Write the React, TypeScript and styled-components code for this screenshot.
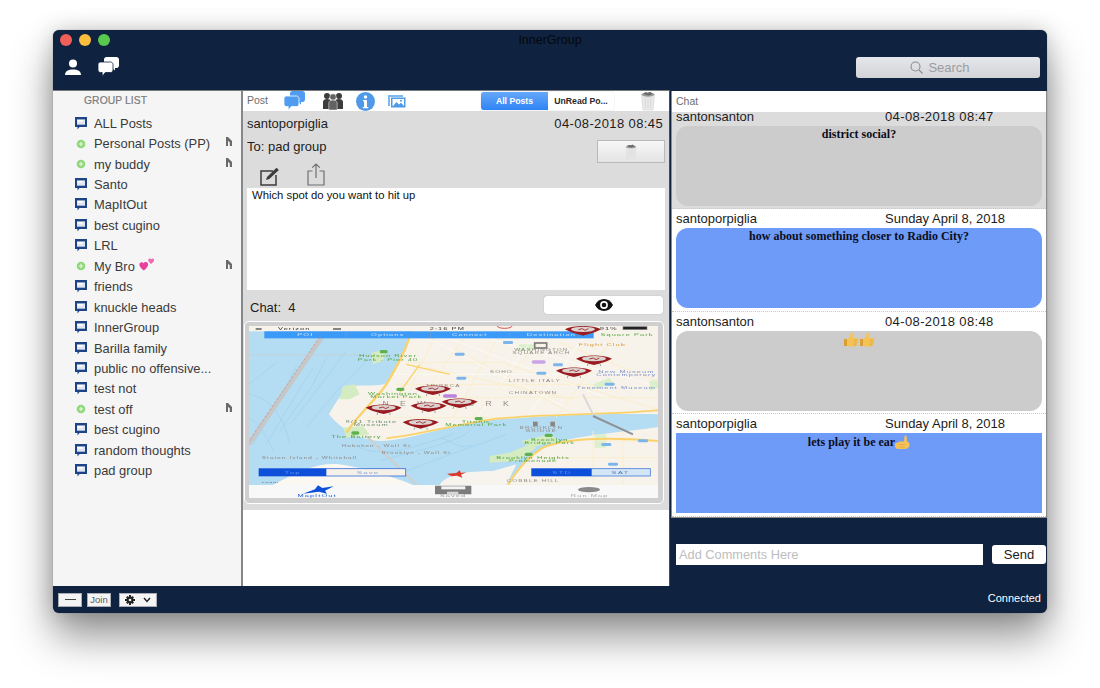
import React from "react";
import styled, { createGlobalStyle } from "styled-components";

const Global = createGlobalStyle`
  html, body { margin: 0; padding: 0; background: #fff; }
  body { font-family: "Liberation Sans", Arial, sans-serif; color: #1c1c1c; }
  * { box-sizing: border-box; }
`;
const NAVY = "#0f2340";

const Page = styled.div`
  width: 1100px; height: 688px; padding: 30px 53px 0; background: #fff; overflow: hidden;
`;
const Win = styled.div`
  width: 994px; height: 583px; border-radius: 6px; background: ${NAVY}; overflow: hidden;
  display: flex; flex-direction: column;
  box-shadow: 0 24px 42px rgba(0,0,0,.42), 0 0 22px rgba(0,0,0,.18), 0 0 1px rgba(0,0,0,.5);
`;
const Header = styled.header`
  height: 60px; flex: none; position: relative; display: flex; flex-direction: column; padding: 4px 7px 0;
`;
const Lights = styled.div`display: flex; gap: 7px;`;
const Light = styled.span<{ $c: string }>`
  width: 12px; height: 12px; border-radius: 50%; background: ${p => p.$c};
`;
const Title = styled.div`
  position: absolute; left: 0; right: 0; top: 3px; text-align: center; font-size: 12.5px; line-height: 15px; color: #04070c;
`;
const HeadRow = styled.div`
  display: flex; align-items: center; height: 26px; margin-top: 8px; padding-left: 5px;
`;
const HeadIcons = styled.div`display: flex; align-items: center; gap: 17px; flex: 1;`;
const SearchBox = styled.div`
  width: 184px; height: 21px; border-radius: 3px;
  background: linear-gradient(#e6e7ea, #d3d4d8);
  display: flex; align-items: center; justify-content: center; gap: 5px; padding-right: 16px;
  color: #9b9da1; font-size: 13px;
`;
const Main = styled.div`flex: 1; display: flex; min-height: 0;`;
const LeftCol = styled.div`width: 617px; flex: none; display: flex; flex-direction: column;`;
const Panels = styled.div`height: 496px; display: flex; background: #fff;`;
const Side = styled.aside`
  width: 190px; flex: none; background: #f5f5f5; border-right: 2px solid #85878a;
  border-top: 1px solid #77797c; padding-top: 3px;
`;
const SideTitle = styled.div`
  font-size: 10.3px; line-height: 14px; color: #7c7c7c; padding-left: 31px; letter-spacing: .1px; margin-bottom: 5px;
  -webkit-text-stroke: .2px #7c7c7c;
`;
const SideRow = styled.div`
  height: 20.45px; display: flex; align-items: center; padding-left: 22px; position: relative;
  font-size: 12.9px; color: #3a3a3a; gap: 7px;
`;
const SideText = styled.span`display: inline-flex; align-items: center; gap: 4px; white-space: nowrap;`;
const HeartWrap = styled.span`display: flex; margin-top: -4px;`;
const Caret = styled.span`
  position: absolute; left: 173px; top: 4px; width: 6px; height: 9px; display: flex;
`;
const Center = styled.section`
  flex: 1; min-width: 0; border-top: 1px solid #77797c; border-right: 1px solid #4c4c4c; display: flex; flex-direction: column; background: #fff;
`;
const PostBar = styled.div`height: 20px; flex: none; display: flex; align-items: center; padding-left: 4px; background: #fff;`;
const PostLabel = styled.span`font-size: 10.5px; color: #6d6d6d; width: 37px; margin-top: -2px;`;
const Slot = styled.span<{ $w: number; $pad?: number }>`
  width: ${p => p.$w}px; padding-left: ${p => p.$pad ?? 0}px; flex: none; display: flex; align-items: center;
`;
const Seg = styled.div`
  width: 133px; height: 18px; border-radius: 3px; display: flex; overflow: hidden; flex: none;
  box-shadow: 0 0 1px rgba(0,0,0,.35); font-size: 8.7px; font-weight: 700;
`;
const SegBtn = styled.span<{ $on?: boolean }>`
  flex: ${p => (p.$on ? "0 0 67px" : "1")}; display: flex; align-items: center; justify-content: center;
  color: ${p => (p.$on ? "#fff" : "#2a2a2a")};
  background: ${p => (p.$on ? "linear-gradient(#66a8f9,#2f83f5)" : "#fff")};
`;
const PostCard = styled.div`height: 399px; flex: none; background: #dcdcdc; display: flex; flex-direction: column; padding: 0 4px;`;
const Meta = styled.div`height: 24px; flex: none; display: flex; align-items: center; justify-content: space-between; font-size: 13px; padding-right: 2px; color: #1c1c1c;`;
const Stamp = styled.span`letter-spacing: .38px;`;
const ToRow = styled.div`height: 28px; flex: none; display: flex; justify-content: space-between; font-size: 13px;`;
const ToText = styled.span`line-height: 15px; margin-top: 4px;`;
const TrashBtn = styled.div`
  width: 68px; height: 23px; margin-top: 5px; border: 1px solid #b9b9b9;
  background: linear-gradient(#f7f7f7,#e4e4e4); display: flex; align-items: center; justify-content: center;
`;
const Tools = styled.div`height: 25px; flex: none; display: flex; align-items: flex-end; padding: 0 0 2px 13px; gap: 27px;`;
const MsgBox = styled.div`
  height: 102px; flex: none; background: #fff; font-size: 11.3px; line-height: 14px; padding: 0 5px; color: #111;
`;
const ChatRow = styled.div`height: 31px; flex: none; display: flex; align-items: center; justify-content: space-between; padding-left: 3px; font-size: 13px;`;
const ChatCount = styled.span`white-space: pre; margin-top: 3px;`;
const EyeBtn = styled.div`
  width: 119px; height: 18px; margin-top: -2px; margin-right: 2px; background: #fff; border-radius: 3px; box-shadow: 0 0 1px rgba(0,0,0,.35);
  display: flex; align-items: center; justify-content: center;
`;
const MapFrame = styled.div`
  width: 420px; height: 183px; margin-left: -3px; border-radius: 5px; border: 1px solid #fff; background: #cfcfcf; padding: 4px 5px 5px 4px; display: flex;
`;
const Foot = styled.footer`height: 27px; flex: none; display: flex; align-items: center; padding: 0 0 0 5px; gap: 5px;`;
const FootBtn = styled.div<{ $w: number; $ml?: number }>`
  width: ${p => p.$w}px; height: 14px; margin-left: ${p => p.$ml ?? 0}px; background: #f4f4f4; border: 1px solid #a9adb3;
  display: flex; align-items: center; justify-content: center; gap: 8px; font-size: 9.5px; color: #5a5a5a;
`;
const Dash = styled.span`width: 11px; height: 1px; background: #444;`;
const RightCol = styled.div`flex: 1; min-width: 0; display: flex; flex-direction: column;`;
const ChatPanel = styled.section`
  height: 427px; flex: none; margin: 1px 0 0 1px; background: #fff; border: 1px solid #8c8c8c; border-width: 0 1px 1px 1px; display: flex; flex-direction: column; overflow: hidden;
`;
const ChatHead = styled.div`height: 21px; flex: none; padding: 4px 4px 0; font-size: 10.5px; line-height: 12px; color: #6d6d6d;`;
const Msg = styled.div<{ $grey?: boolean; $h: number }>`
  height: ${p => p.$h}px; flex: none; background: ${p => (p.$grey ? "#dcdcdc" : "#fff")}; overflow: hidden;
  border-bottom: 1px dotted #c8c8c8; padding: 0 0 0 4px; display: flex; flex-direction: column;
`;
const MsgHead = styled.div<{ $h: number }>`
  height: ${p => p.$h}px; flex: none; display: grid; grid-template-columns: 209px 1fr; font-size: 13px; align-content: end; line-height: 15px; color: #1c1c1c; padding-bottom: 2px;
`;
const Bubble = styled.div<{ $blue?: boolean; $square?: boolean }>`
  width: 366px; height: 80px; flex: none; background: ${p => (p.$blue ? "#6d9bf7" : "#cccccc")};
  border-radius: ${p => (p.$square ? 0 : 12)}px;
  font-family: "Liberation Serif", "Times New Roman", serif; font-weight: 700; font-size: 12px; line-height: 15px; color: #0d0d1c;
  display: flex; justify-content: center; align-items: flex-start; padding-top: ${p => (p.$square ? 2 : 1)}px;
`;
const Composer = styled.div`flex: 1; display: flex; align-items: flex-start; padding: 26px 0 0 6px; position: relative;`;
const Input = styled.div`
  width: 307px; height: 21px; background: #fff; color: #bdbdbd; font-size: 12.8px; line-height: 21px; padding-left: 3px;
`;
const SendBtn = styled.div`
  width: 54px; height: 19px; margin: 1px 0 0 9px; border-radius: 3px; background: #fff; font-size: 13px; line-height: 19px; text-align: center; color: #1c1c1c;
`;
const Status = styled.div`position: absolute; right: 6px; bottom: 8px; color: #fff; font-size: 11px; line-height: 13px;`;

const Person = () => (
  <svg width="16" height="17" viewBox="0 0 16 17"><circle cx="8" cy="4.6" r="4" fill="#fff" /><path d="M0 16c0-4 3.4-5.6 8-5.6S16 12 16 16z" fill="#fff" /></svg>
);
const Chats = ({ c, bg }: { c: string; bg: string }) => (
  <svg width="21" height="20" viewBox="0 0 21 20">
    <path d="M8.500 0H18.400C19.800 0 21 1.100 21 2.500V8.400C21 9.800 19.800 11 18.400 11H17V13.600L13.700 11H8.500C7.100 11 6 9.800 6 8.400V2.500C6 1.100 7.100 0 8.500 0Z" fill={c} />
    <path d="M2.500 5H12.500C13.900 5 15 6.100 15 7.500V13C15 14.400 13.900 15.500 12.500 15.500H7.300L4.200 19.500V15.500H2.500C1.100 15.500 0 14.400 0 13V7.500C0 6.100 1.100 5 2.500 5Z" fill={c} stroke={bg} strokeWidth=".8" />
  </svg>
);
const Group = () => (
  <svg width="20" height="18" viewBox="0 0 20 18">
    <g fill="#3c3c3c"><circle cx="4" cy="4" r="3" /><circle cx="16" cy="4" r="3" /><path d="M0 17V10c0-2 1.600-3 4-3s4 1 4 3v7zM12 17V10c0-2 1.600-3 4-3s4 1 4 3v7z" /></g>
    <g fill="#626262" stroke="#fff" strokeWidth=".5"><circle cx="10" cy="5" r="3.200" /><path d="M5.800 18v-7c0-2 1.800-3 4.200-3s4.200 1 4.200 3v7z" /></g>
  </svg>
);
const Info = () => (
  <svg width="19" height="19" viewBox="0 0 19 19"><circle cx="9.500" cy="9.500" r="9.500" fill="#4f9ae8" /><circle cx="9.500" cy="5" r="1.700" fill="#fff" /><path d="M7 8h4v7h1.300v1.200H6.800V15H8V9.200H7z" fill="#fff" /></svg>
);
const Pic = () => (
  <svg width="18" height="13" viewBox="0 0 18 13"><path d="M0 0h15v2H2v9H0z" fill="#7fb8ee" /><rect x="3" y="2.500" width="14.500" height="10" fill="#4f9ae8" /><rect x="4.500" y="4" width="11.500" height="7" fill="#fff" /><path d="M5 11l3.500-4 2.500 2.500 2-1.800L16 11z" fill="#4f9ae8" /><circle cx="13" cy="5.800" r="1" fill="#4f9ae8" /></svg>
);
const Trash = ({ w, h }: { w: number; h: number }) => (
  <svg width={w} height={h} viewBox="0 0 16 20">
    <path d="M1.500 3.500h13L13 19H3z" fill="#e9e9e9" stroke="#d2d2d2" strokeWidth=".6" />
    <ellipse cx="8" cy="3.500" rx="6.500" ry="2.200" fill="#9a9a9a" />
    <path d="M3.500 3l2-2 2 1.400L10 .8l2.500 2.200-4 1.500z" fill="#666" />
    <path d="M5 6l.6 11M8 6v11M11 6l-.6 11" stroke="#d4d4d4" strokeWidth=".8" />
  </svg>
);
const Compose = () => (
  <svg width="20" height="19" viewBox="0 0 20 19" fill="none">
    <path d="M13 4H1v14h15V8" stroke="#3d3d3d" strokeWidth="1.500" />
    <path d="M6 13l1-3L16.500.8l2.400 2.200L9.300 12z" fill="#3d3d3d" />
  </svg>
);
const Share = () => (
  <svg width="18" height="23" viewBox="0 0 18 23" fill="none" stroke="#6f6f6f" strokeWidth="1.200">
    <path d="M5.500 8H1v14h16V8h-4.500" /><path d="M9 15V1M5.200 4.600L9 1l3.800 3.600" />
  </svg>
);
const Eye = () => (
  <svg width="18" height="12" viewBox="0 0 18 12"><path d="M0 6c2-3.700 5-6 9-6s7 2.300 9 6c-2 3.700-5 6-9 6s-7-2.300-9-6z" fill="#111" /><circle cx="9" cy="6" r="3.900" fill="#fff" /><circle cx="9" cy="6" r="2.300" fill="#111" /></svg>
);
const Gear = () => (
  <svg width="10" height="10" viewBox="0 0 10 10"><g fill="#222"><circle cx="5" cy="5" r="3.400" /><path d="M4 0h2v2H4zM4 8h2v2H4zM0 4h2v2H0zM8 4h2v2H8zM1 2.400L2.400 1l1.300 1.300-1.400 1.400zM6.300 7.700l1.400-1.400L9 7.600 7.600 9zM1 7.600l1.300-1.300 1.400 1.400L2.400 9zM6.300 2.300L7.600 1 9 2.400 7.700 3.700z" /></g><circle cx="5" cy="5" r="1.300" fill="#f4f4f4" /></svg>
);
const Chevron = () => (
  <svg width="8" height="6" viewBox="0 0 8 6" fill="none"><path d="M1 1l3 3.400L7 1" stroke="#222" strokeWidth="1.500" /></svg>
);
const Mag = () => (
  <svg width="13" height="13" viewBox="0 0 13 13" fill="none" stroke="#8a8c90" strokeWidth="1.100"><circle cx="5.500" cy="5.500" r="4.500" /><path d="M9 9l3.500 3.500" /></svg>
);
const Bub = () => (
  <svg width="12" height="13" viewBox="0 0 12 13"><path d="M0 0h12v10H4.500L2.500 12.500V10H0z" fill="#1c4487" /><rect x="2" y="2.400" width="8" height="5.300" fill="#dfe6f1" /><rect x="2.500" y="3" width="5" height="1.700" fill="#fff" /></svg>
);
const Plus = () => (
  <svg width="12" height="12" viewBox="0 0 12 12"><circle cx="6" cy="6" r="4.300" fill="#8fd87a" /><path d="M6 3.800v4.400M3.800 6h4.400" stroke="#e9f8e4" strokeWidth="1.100" /></svg>
);
const CaretIcon = () => (
  <svg width="6" height="9" viewBox="0 0 6 9"><path d="M0 0h2L6 4v5H3.800V5.500L2 3.800V9H0z" fill="#6a6a6a" /></svg>
);
const Hearts = () => (
  <svg width="16" height="14" viewBox="0 0 16 14">
    <path d="M4.800 13.500C1.500 11 0 9 .5 6.800 1 5 3.400 4.600 4.700 6.300 5.600 4.400 8.300 4.600 9 6.500 9.700 8.800 7.500 11.500 4.800 13.500Z" fill="#e83f9c" />
    <path d="M12 7C10 5.500 9 4.200 9.300 2.800 9.700 1.400 11.300 1.200 12.100 2.300 12.800 1 14.600 1.200 15.100 2.500 15.500 4 13.900 5.700 12 7Z" fill="#f06bb4" />
  </svg>
);
const Thumb = () => (
  <svg width="16" height="15" viewBox="0 0 16 15">
    <path d="M1 7h3v7H1z" fill="#d99f33" />
    <path d="M4 7.500C6 6 7.500 4 7.500 1.500 7.500 0 10 0 10 2.200 10 3.600 9.500 5 9.500 5.700H14C15.800 5.700 15.800 8 14.800 8.300 15.800 9 15.400 10.600 14.400 10.800 15 11.600 14.500 12.900 13.500 13 13.800 13.800 13.200 14.600 12.300 14.600H7C5.500 14.600 4.800 14 4 13.800Z" fill="#f4c257" />
    <path d="M10.500 8.300H14.800M10.500 10.800H14.400M10.500 13H13.500" stroke="#d99f33" strokeWidth=".6" />
  </svg>
);
const CallMe = () => (
  <svg width="15" height="15" viewBox="0 0 15 15">
    <path d="M1 8C2.500 8 4 6.500 5 6.500H9L9.500 1.500C9.700 .2 11.500 .2 11.700 1.500L12 6.500C14 7 15 8.500 14.500 10.500 14 13 12 14 9.500 14H3C1 14 0 12.500 0 11 0 9.500 0 8 1 8Z" fill="#f4c257" />
    <path d="M4 9.500H10M4 12H10" stroke="#d99f33" strokeWidth=".6" />
  </svg>
);

const Pin = ({ x, y }: { x: number; y: number }) => (
  <g transform={`translate(${x} ${y})`}>
    <path d="M-54 -3C-30 -16 30 -16 54 -3 40 6 15 12 0 16-15 12-40 6-54 -3Z" fill="#9a1f22" />
    <ellipse cx="0" cy="-3" rx="36" ry="8" fill="#dcd2cf" />
    <path d="M-14 -2l12 -3 8 5 10-5" stroke="#9a1f22" strokeWidth="2.500" fill="none" />
    <path d="M-18 13l-2 6M18 13l2 6" stroke="#777" strokeWidth="2" />
  </g>
);
const greenLabel = { fill: "#52a63c", fontFamily: "Liberation Sans, sans-serif", fontSize: 14, letterSpacing: 2 };
const greyLabel = { fill: "#8f8b85", fontFamily: "Liberation Sans, sans-serif", fontSize: 12, letterSpacing: 2 };
const barLabel = { ...greyLabel, fill: "#cfe6ff", fontSize: 14 };
const T = ({ x, y, s, k = greenLabel, a = "start", sy = .75, sx = 1.6 }: any) => (
  <text transform={`translate(${x} ${y}) scale(${sx} ${sy})`} style={k} textAnchor={a}>{s}</text>
);

const MapArt = () => (
  <svg width="409" height="172" viewBox="28 125 1227 516" style={{ display: "block" }}>
    <defs>
      <filter id="soft" x="0" y="0" width="1" height="1"><feGaussianBlur stdDeviation="1.800" /></filter>
    </defs>
    <g filter="url(#soft)">
      <rect x="28" y="125" width="1227" height="516" fill="#b4dcf2" />
      <g fill="none" stroke="#9fd0ef" strokeWidth="2">
        <path d="M28 300L110 235M40 480L130 330 170 245M80 480L170 330 220 250M120 440L220 300 260 220M160 410L260 280 320 200M200 430L300 310 380 230" />
        <path d="M28 330C90 340 130 390 150 480M28 400C60 420 90 470 100 500M420 530C520 500 640 480 690 440M500 560C600 520 720 480 800 450M360 490C430 520 520 490 640 450M600 460C640 470 660 500 700 480" />
      </g>
      <path d="M270 125L28 480" stroke="#c6c7c9" strokeWidth="13" fill="none" />
      <path d="M262 125L28 470" stroke="#d7876d" strokeWidth="2" strokeDasharray="8 5" fill="none" />
      <path d="M28 212H470" stroke="#c9ced1" strokeWidth="2" />
      <path d="M520 125H1255V390C1100 385 900 395 780 405 620 420 510 470 420 470 350 465 300 430 268 390 290 350 310 320 340 305 390 300 430 310 450 290 480 230 505 175 520 125Z" fill="#f7f3eb" />
      <path d="M1255 428C1150 445 1000 450 910 490 860 520 830 560 800 602H1255Z" fill="#f7f3eb" />
      <path d="M600 602C620 570 680 560 760 560L830 540 800 602Z" fill="#f7f4ee" />
      <path d="M100 602C180 560 230 535 300 540 370 550 440 570 520 602Z" fill="#fbf8f2" />
      <path d="M310 305L345 300 360 330 330 345 300 345Z" fill="#d5ecc2" />
      <path d="M310 430L370 425 390 450 320 460Z" fill="#d5ecc2" />
      <path d="M750 515L810 505 870 480 890 490 830 530 750 535Z" fill="#d5ecc2" />
      <path d="M395 205L440 195 430 230 400 240Z" fill="#d5ecc2" />
      <path d="M845 470L930 450 960 470 870 490Z" fill="#d5ecc2" />
      <path d="M840 180H890L880 200H830ZM1060 300L1110 280 1120 295 1070 315ZM1065 450H1100V490H1065ZM1230 290L1255 285V310L1230 320Z" fill="#dcefcc" />
      <g fill="none" stroke="#fbeecb" strokeWidth="3">
        <path d="M600 125L510 320M680 150L560 320M780 150L640 400M900 170L700 400M1120 160L950 400M500 235H800M470 300H1060M560 250L1000 345M960 175L1255 290M640 190L1000 390M800 240L1255 375M450 340H1255M380 400H780M1060 440V600M1150 440V600M1070 470H1255M900 520H1255" />
      </g>
      <g fill="none" stroke="#fff" strokeWidth="1.500">
        <path d="M560 160L980 370M620 160L1100 340M740 160L1230 300M460 270H1000M880 160L720 390M1030 160L860 400" />
      </g>
      <g fill="none" stroke="#fbd26b" strokeWidth="7">
        <path d="M518 125C505 190 470 250 440 300 410 345 360 385 320 445" />
        <path d="M440 462C550 450 640 420 780 402 930 388 1090 392 1255 378" strokeWidth="5" />
        <path d="M1255 470C1100 458 980 460 910 490 860 520 830 560 805 602" strokeWidth="6" />
        <path d="M500 240L630 270M480 325L540 240" strokeWidth="4" />
      </g>
      <path d="M380 455L532 602" stroke="#cecfd0" strokeWidth="7" />
      <path d="M1060 395L1180 450" stroke="#8e9295" strokeWidth="6" />
      <path d="M1030 330L1060 390" stroke="#d9d9d9" strokeWidth="6" />
      <rect x="28" y="125" width="1227" height="16" fill="#f7f3eb" />
      <T x={115} y={138} s="Verizon" k={{ ...greyLabel, fill: "#333", fontSize: 14 }} />
      <path d="M48 131h18v6H48zM280 131h24v6h-24z" fill="#555" opacity=".7" />
      <T x={570} y={138} s="2:16 PM" k={{ ...greyLabel, fill: "#333", fontSize: 14 }} />
      <rect x="1150" y="127" width="72" height="9" fill="#222" stroke="#888" strokeWidth="2" />
      <T x={1080} y={138} s="91%" k={{ ...greyLabel, fill: "#333", fontSize: 14 }} />
      <rect x="74" y="141" width="988" height="21" fill="#3b99f8" />
      <path d="M319 141v21M572 141v21M809 141v21" stroke="#7aa0c9" strokeWidth="2" />
      <T x={197} y={156} s="POI" k={barLabel} a="middle" />
      <T x={444} y={156} s="Options" k={barLabel} a="middle" />
      <T x={690} y={156} s="Connect" k={barLabel} a="middle" />
      <T x={935} y={156} s="Destination" k={barLabel} a="middle" />
      <T x={445} y={219} s="Hudson River" a="middle" />
      <T x={445} y={230} s="Park - Pier 40" a="middle" />
      <T x={460} y={331} s="Washington" a="middle" />
      <T x={470} y={340} s="Market Park" a="middle" />
      <T x={395} y={417} s="9/11 Tribute" a="middle" k={{ ...greenLabel, fill: "#6c8c6a" }} />
      <T x={395} y={426} s="Museum" a="middle" k={{ ...greenLabel, fill: "#6c8c6a" }} />
      <T x={350} y={461} s="The Battery" a="middle" />
      <T x={710} y={415} s="Titanic" a="middle" />
      <T x={710} y={426} s="Memorial Park" a="middle" />
      <T x={930} y={470} s="Brooklyn" a="middle" />
      <T x={930} y={480} s="Bridge Park" a="middle" />
      <T x={880} y={523} s="Brooklyn Heights" a="middle" />
      <T x={880} y={533} s="Promenade" a="middle" />
      <T x={1162} y={156} s="Square Park" a="middle" />
      <T x={1088} y={186} s="Flight Club" a="middle" k={{ ...greenLabel, fill: "#e29a35" }} />
      <T x={905} y={200} s="WASHINGTON" a="middle" k={greyLabel} />
      <T x={905} y={208} s="SQUARE ARCH" a="middle" k={greyLabel} />
      <T x={785} y={265} s="SOHO" a="middle" k={greyLabel} />
      <T x={885} y={293} s="LITTLE ITALY" a="middle" k={greyLabel} />
      <T x={880} y={329} s="CHINATOWN" a="middle" k={greyLabel} />
      <T x={610} y={308} s="TRIBECA" a="middle" k={greyLabel} />
      <T x={635} y={366} s="NEW YORK" a="middle" sx={1} sy={.9} k={{ ...greyLabel, fontSize: 26, letterSpacing: 34 }} />
      <T x={1160} y={266} s="New Museum" a="middle" k={{ ...greenLabel, fill: "#7b8fd0" }} />
      <T x={1160} y={275} s="Contemporary" a="middle" k={{ ...greenLabel, fill: "#7b8fd0" }} />
      <T x={1130} y={313} s="Tenement Museum" a="middle" k={{ ...greenLabel, fill: "#7b8fd0" }} />
      <T x={905} y={435} s="BROOKLYN" a="middle" k={greyLabel} />
      <T x={905} y={444} s="BRIDGE" a="middle" k={greyLabel} />
      <T x={410} y={487} s="Hoboken - Wall St" k={greyLabel} a="middle" />
      <T x={210} y={525} s="Staten Island - Whitehall" k={greyLabel} a="middle" />
      <T x={530} y={510} s="Brooklyn - Wall St" k={greyLabel} a="middle" />
      <T x={880} y={592} s="COBBLE HILL" a="middle" k={greyLabel} />
      <g fill="#7bb5ec">
        <rect x="645" y="205" width="30" height="9" rx="4" /><rect x="790" y="170" width="30" height="9" rx="4" />
        <rect x="650" y="277" width="30" height="9" rx="4" /><rect x="890" y="262" width="30" height="9" rx="4" />
        <rect x="940" y="237" width="30" height="9" rx="4" /><rect x="1095" y="295" width="30" height="9" rx="4" />
        <rect x="1085" y="476" width="30" height="9" rx="4" /><rect x="1195" y="465" width="30" height="9" rx="4" />
        <rect x="1105" y="535" width="30" height="9" rx="4" />
      </g>
      <g fill="#5fb050">
        <rect x="420" y="197" width="24" height="10" rx="5" /><rect x="470" y="310" width="24" height="10" rx="5" />
        <rect x="335" y="441" width="24" height="10" rx="5" /><rect x="705" y="398" width="24" height="10" rx="5" />
        <rect x="915" y="448" width="24" height="10" rx="5" /><rect x="855" y="505" width="24" height="10" rx="5" />
      </g>
      <rect x="885" y="176" width="36" height="15" fill="none" stroke="#7c7a78" strokeWidth="5" />
      <rect x="610" y="330" width="42" height="10" rx="5" fill="#b982e0" />
      <rect x="876" y="228" width="42" height="10" rx="5" fill="#c9a4e6" />
      <rect x="880" y="412" width="14" height="14" fill="#8a8782" /><rect x="932" y="412" width="14" height="14" fill="#8a8782" />
      <ellipse cx="795" cy="125" rx="22" ry="7" fill="none" stroke="#c55" strokeWidth="3" />
      <Pin x={1030} y={138} /><Pin x={1063} y={226} /><Pin x={1003} y={262} />
      <Pin x={580} y={316} /><Pin x={660} y={355} /><Pin x={567} y={367} />
      <Pin x={432} y={373} /><Pin x={543} y={417} />
      <rect x="58" y="553" width="440" height="22" fill="#f6f1e8" stroke="#3a6fe0" strokeWidth="2.500" />
      <rect x="58" y="553" width="202" height="22" fill="#0a4fd8" />
      <T x={159} y={569} s="Top" a="middle" k={{ ...greyLabel, fill: "#5f8ff0", fontSize: 15 }} />
      <T x={385} y={569} s="Save" a="middle" k={{ ...greyLabel, fill: "#7f9fe0", fontSize: 15 }} />
      <rect x="876" y="553" width="356" height="22" fill="#cfe5f5" stroke="#3a6fe0" strokeWidth="2.500" opacity=".9" />
      <rect x="876" y="553" width="180" height="22" fill="#0a4fd8" />
      <T x={966} y={569} s="STD" a="middle" k={{ ...greyLabel, fill: "#5f8ff0", fontSize: 15 }} />
      <T x={1142} y={569} s="SAT" a="middle" k={{ ...greyLabel, fill: "#5f7fc0", fontSize: 15 }} />
      <path d="M622 568L650 566 660 558 664 566 680 564 664 571 668 580 652 574 636 576Z" fill="#d83a2a" />
      <T x={66} y={595} s="Legal" k={{ ...greyLabel, fill: "#555" }} sx={1.3} sy={.6} />
      <rect x="28" y="602" width="1227" height="39" fill="#f8f8f8" />
      <path d="M235 603L248 611 282 606 256 619 262 628 238 622 190 628 226 615Z" fill="#0a4fd8" />
      <T x={232} y={639} s="MapItOut" a="middle" k={{ ...greyLabel, fill: "#1b5ad8", fontSize: 14 }} />
      <path d="M586 604H695V630H586Z" fill="#7b7b7b" />
      <rect x="605" y="606" width="72" height="9" fill="#f3f3f3" /><rect x="622" y="622" width="34" height="8" fill="#d6d6d6" />
      <T x={640} y={639} s="Saved" a="middle" k={{ ...greyLabel, fill: "#9a9a9a", fontSize: 14 }} />
      <ellipse cx="1048" cy="616" rx="33" ry="8" fill="#8a8a8a" />
      <T x={1050} y={639} s="Run Map" a="middle" k={{ ...greyLabel, fill: "#a8a8a8", fontSize: 14 }} />
    </g>
  </svg>
);

type G = { n: string; plus?: boolean; hearts?: boolean };
const groups: G[] = [
  { n: "ALL Posts" }, { n: "Personal Posts (PP)", plus: true }, { n: "my buddy", plus: true }, { n: "Santo" },
  { n: "MapItOut" }, { n: "best cugino" }, { n: "LRL" }, { n: "My Bro", plus: true, hearts: true }, { n: "friends" },
  { n: "knuckle heads" }, { n: "InnerGroup" }, { n: "Barilla family" }, { n: "public no offensive..." },
  { n: "test not" }, { n: "test off", plus: true }, { n: "best cugino" }, { n: "random thoughts" }, { n: "pad group" },
];

export default function App() {
  return (
    <Page>
      <Global />
      <Win>
        <Header>
          <Title>InnerGroup</Title>
          <Lights>
            <Light $c="#f25f58" /><Light $c="#fbbe3f" /><Light $c="#58c94d" />
          </Lights>
          <HeadRow>
            <HeadIcons>
              <Person />
              <Chats c="#fff" bg={NAVY} />
            </HeadIcons>
            <SearchBox><Mag />Search</SearchBox>
          </HeadRow>
        </Header>
        <Main>
          <LeftCol>
            <Panels>
              <Side>
                <SideTitle>GROUP LIST</SideTitle>
                {groups.map((g, i) => (
                  <SideRow key={i}>
                    {g.plus ? <Plus /> : <Bub />}
                    <SideText>{g.n}{g.hearts && <HeartWrap><Hearts /></HeartWrap>}</SideText>
                    {g.plus && <Caret><CaretIcon /></Caret>}
                  </SideRow>
                ))}
              </Side>
              <Center>
                <PostBar>
                  <PostLabel>Post</PostLabel>
                  <Slot $w={39}><Chats c="#4f9cf0" bg="#fff" /></Slot>
                  <Slot $w={33}><Group /></Slot>
                  <Slot $w={32}><Info /></Slot>
                  <Slot $w={93}><Pic /></Slot>
                  <Seg><SegBtn $on>All Posts</SegBtn><SegBtn>UnRead Po...</SegBtn></Seg>
                  <Slot $w={42} $pad={26}><Trash w={16} h={20} /></Slot>
                </PostBar>
                <PostCard>
                  <Meta><span>santoporpiglia</span><Stamp>04-08-2018 08:45</Stamp></Meta>
                  <ToRow><ToText>To: pad group</ToText><TrashBtn><Trash w={12} h={15} /></TrashBtn></ToRow>
                  <Tools><Compose /><Share /></Tools>
                  <MsgBox>Which spot do you want to hit up</MsgBox>
                  <ChatRow><ChatCount>Chat:  4</ChatCount><EyeBtn><Eye /></EyeBtn></ChatRow>
                  <MapFrame><MapArt /></MapFrame>
                </PostCard>
              </Center>
            </Panels>
            <Foot>
              <FootBtn $w={24}><Dash /></FootBtn>
              <FootBtn $w={24}>Join</FootBtn>
              <FootBtn $w={38} $ml={3}><Gear /><Chevron /></FootBtn>
            </Foot>
          </LeftCol>
          <RightCol>
            <ChatPanel>
              <ChatHead>Chat</ChatHead>
              <Msg $grey $h={97}>
                <MsgHead $h={14}><span>santonsanton</span><Stamp>04-08-2018 08:47</Stamp></MsgHead>
                <Bubble>district social?</Bubble>
              </Msg>
              <Msg $h={103}>
                <MsgHead $h={19}><span>santoporpiglia</span><span>Sunday April 8, 2018</span></MsgHead>
                <Bubble $blue>how about something closer to Radio City?</Bubble>
              </Msg>
              <Msg $h={102}>
                <MsgHead $h={19}><span>santonsanton</span><Stamp>04-08-2018 08:48</Stamp></MsgHead>
                <Bubble><Thumb /><Thumb /></Bubble>
              </Msg>
              <Msg $h={103}>
                <MsgHead $h={19}><span>santoporpiglia</span><span>Sunday April 8, 2018</span></MsgHead>
                <Bubble $blue $square>lets play it be ear<CallMe /></Bubble>
              </Msg>
            </ChatPanel>
            <Composer>
              <Input>Add Comments Here</Input>
              <SendBtn>Send</SendBtn>
              <Status>Connected</Status>
            </Composer>
          </RightCol>
        </Main>
      </Win>
    </Page>
  );
}
